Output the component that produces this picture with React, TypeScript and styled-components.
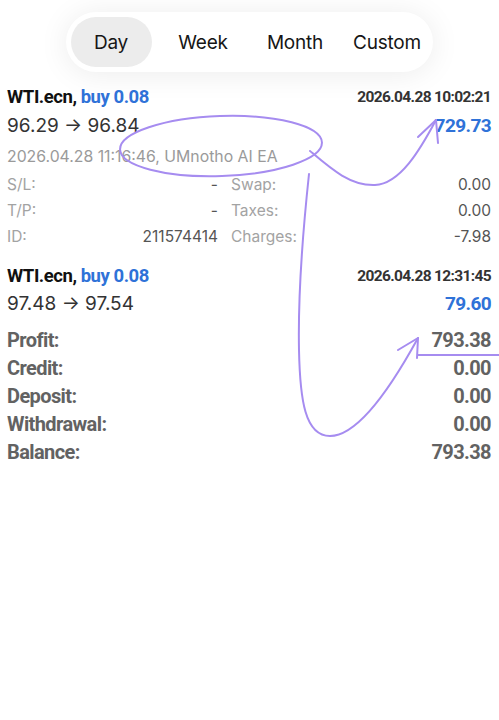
import React from "react";
import styled, { createGlobalStyle } from "styled-components";

const GlobalStyle = createGlobalStyle`
  html, body { margin: 0; padding: 0; background: #ffffff; }
  body { font-family: Inter, "Noto Sans", sans-serif; -webkit-font-smoothing: antialiased; }
`;

const NARROW = `Roboto, "Liberation Sans", sans-serif`;

const Page = styled.div`
  position: relative;
  width: 499px;
  height: 720px;
  overflow: hidden;
  background: #fff;
`;

const TopArea = styled.div`
  display: flex;
  justify-content: center;
  padding-top: 12px;
  padding-right: 1px;
`;

const Segmented = styled.div`
  display: flex;
  gap: 11px;
  padding: 5px;
  border-radius: 31px;
  background: #ffffff;
  box-shadow: 0 2px 30px rgba(0, 0, 0, 0.08);
`;

const Segment = styled.div<{ $active?: boolean }>`
  width: 81px;
  height: 50px;
  border-radius: 25px;
  display: flex;
  align-items: center;
  justify-content: center;
  font-family: Inter, sans-serif;
  font-size: 19px;
  color: #161616;
  letter-spacing: -0.2px;
  background: ${(p) => (p.$active ? "#ececec" : "transparent")};
`;

const Content = styled.div`
  padding: 13px 8px 0 7px;
`;

const Trade = styled.div<{ $gap?: number }>`
  display: flex;
  flex-direction: column;
  margin-bottom: ${(p) => p.$gap ?? 0}px;
`;

const Line = styled.div<{ $h: number; $mt?: number }>`
  display: flex;
  justify-content: space-between;
  align-items: center;
  height: ${(p) => p.$h}px;
  margin-top: ${(p) => p.$mt ?? 0}px;
`;

const Title = styled.span`
  font-family: ${NARROW};
  font-weight: 700;
  font-size: 18.5px;
  letter-spacing: -0.45px;
  color: #111;
`;

const Blue = styled.span`
  color: #2f72d8;
`;

const Stamp = styled.span`
  font-family: ${NARROW};
  font-weight: 700;
  font-size: 15.5px;
  letter-spacing: -0.65px;
  color: #333;
`;

const Price = styled.span`
  font-family: Inter, sans-serif;
  font-size: 19px;
  color: #333;
`;

const Profit = styled.span`
  font-family: ${NARROW};
  font-weight: 700;
  font-size: 19px;
  letter-spacing: -0.6px;
  color: #2f72d8;
`;

const Comment = styled.span`
  font-family: Inter, sans-serif;
  font-size: 15.8px;
  color: #9a9a9a;
`;

const DetailList = styled.div`
  margin-top: 3px;
  display: flex;
  flex-direction: column;
`;

const DetailRow = styled.div`
  display: flex;
  height: 26px;
  align-items: center;
  font-family: Inter, sans-serif;
  font-size: 15.5px;
`;

const Half = styled.div<{ $w?: number }>`
  display: flex;
  justify-content: space-between;
  ${(p) => (p.$w ? `width: ${p.$w}px; margin-right: 13px;` : "flex: 1;")}
`;

const Label = styled.span`
  color: #a3a3a3;
`;

const Value = styled.span`
  color: #555;
`;

const SummaryRow = styled.div`
  display: flex;
  justify-content: space-between;
  align-items: center;
  height: 28px;
  font-family: ${NARROW};
  font-weight: 700;
  font-size: 20px;
  letter-spacing: -0.6px;
  color: #626262;
`;

const Summary = styled.div`
  margin-top: 9px;
  display: flex;
  flex-direction: column;
`;

const Overlay = styled.svg`
  position: absolute;
  left: 0;
  top: 0;
  pointer-events: none;
`;

const details = [
  ["S/L:", "-", "Swap:", "0.00"],
  ["T/P:", "-", "Taxes:", "0.00"],
  ["ID:", "211574414", "Charges:", "-7.98"],
];

const summary = [
  ["Profit:", "793.38"],
  ["Credit:", "0.00"],
  ["Deposit:", "0.00"],
  ["Withdrawal:", "0.00"],
  ["Balance:", "793.38"],
];

export default function App() {
  return (
    <Page>
      <GlobalStyle />
      <TopArea>
        <Segmented>
          <Segment $active>Day</Segment>
          <Segment>Week</Segment>
          <Segment>Month</Segment>
          <Segment>Custom</Segment>
        </Segmented>
      </TopArea>
      <Content>
        <Trade $gap={15}>
          <Line $h={24}>
            <Title>
              WTI.ecn, <Blue>buy 0.08</Blue>
            </Title>
            <Stamp>2026.04.28 10:02:21</Stamp>
          </Line>
          <Line $h={28} $mt={2}>
            <Price>96.29 → 96.84</Price>
            <Profit>729.73</Profit>
          </Line>
          <Line $h={24} $mt={5}>
            <Comment>2026.04.28 11:16:46, UMnotho AI EA</Comment>
          </Line>
          <DetailList>
            {details.map((d) => (
              <DetailRow key={d[0]}>
                <Half $w={211}>
                  <Label>{d[0]}</Label>
                  <Value>{d[1]}</Value>
                </Half>
                <Half>
                  <Label>{d[2]}</Label>
                  <Value>{d[3]}</Value>
                </Half>
              </DetailRow>
            ))}
          </DetailList>
        </Trade>
        <Trade>
          <Line $h={24}>
            <Title>
              WTI.ecn, <Blue>buy 0.08</Blue>
            </Title>
            <Stamp>2026.04.28 12:31:45</Stamp>
          </Line>
          <Line $h={28} $mt={1}>
            <Price>97.48 → 97.54</Price>
            <Profit>79.60</Profit>
          </Line>
        </Trade>
        <Summary>
          {summary.map((s) => (
            <SummaryRow key={s[0]}>
              <span>{s[0]}</span>
              <span>{s[1]}</span>
            </SummaryRow>
          ))}
        </Summary>
      </Content>
      <Overlay width="499" height="720" viewBox="0 0 499 720">
        <g fill="none" stroke="#a68cf0" strokeWidth="2" strokeLinecap="round" strokeLinejoin="round">
          <ellipse cx="221" cy="146" rx="101" ry="30" transform="rotate(-2 221 146)" />
          <path d="M310 151 C 330 168, 350 186, 375 185 C 400 184, 420 150, 436 120" />
          <path d="M418 137 L436 120 L438 143" />
          <path d="M309 174 C 303 230, 298 300, 299 350 C 300 400, 305 436, 330 436 C 360 436, 395 380, 418 338" />
          <path d="M398 350 L418 338 L417 358" />
          <path d="M418 355 L499 355" />
        </g>
      </Overlay>
    </Page>
  );
}
